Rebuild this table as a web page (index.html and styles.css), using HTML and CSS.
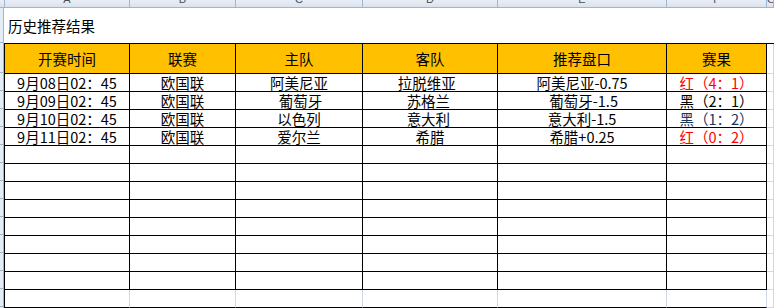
FILE: index.html
```html
<!DOCTYPE html>
<html lang="zh">
<head>
<meta charset="utf-8">
<title>历史推荐结果</title>
<link rel="stylesheet" href="styles.css">
</head>
<body>
<div class="sheet">
  <div class="colhdr">
    <div class="ch corner"></div>
    <div class="ch"><span>A</span></div>
    <div class="ch"><span>B</span></div>
    <div class="ch"><span>C</span></div>
    <div class="ch"><span>D</span></div>
    <div class="ch"><span>E</span></div>
    <div class="ch"><span>F</span></div>
    <div class="ch"><span>G</span></div>
  </div>
  <div class="body">
    <div class="rowhdr">
      <div class="rh rh-title"></div>
      <div class="rh rh-head"></div>
      <div class="rh"></div><div class="rh"></div><div class="rh"></div><div class="rh"></div>
      <div class="rh"></div><div class="rh"></div><div class="rh"></div><div class="rh"></div>
      <div class="rh"></div><div class="rh"></div><div class="rh"></div><div class="rh"></div>
      <div class="rh"></div>
    </div>
    <div class="content">
      <div class="title">历史推荐结果</div>
      <div class="grid">
        <div class="c h">开赛时间</div><div class="c h">联赛</div><div class="c h">主队</div><div class="c h">客队</div><div class="c h">推荐盘口</div><div class="c h">赛果</div><div class="g"></div>

        <div class="c">9月08日02：45</div><div class="c">欧国联</div><div class="c">阿美尼亚</div><div class="c">拉脱维亚  </div><div class="c">阿美尼亚-0.75</div><div class="c red">红（4：1）</div><div class="g"></div>
        <div class="c">9月09日02：45</div><div class="c">欧国联</div><div class="c"> 葡萄牙</div><div class="c">苏格兰 </div><div class="c"> 葡萄牙-1.5</div><div class="c">黑（2：1）</div><div class="g"></div>
        <div class="c">9月10日02：45</div><div class="c">欧国联</div><div class="c">以色列</div><div class="c">意大利 </div><div class="c">意大利-1.5</div><div class="c navy">黑（1：2）</div><div class="g"></div>
        <div class="c">9月11日02：45</div><div class="c">欧国联</div><div class="c">爱尔兰</div><div class="c">希腊</div><div class="c">希腊+0.25</div><div class="c red">红（0：2）</div><div class="g"></div>

        <div class="c"></div><div class="c"></div><div class="c"></div><div class="c"></div><div class="c"></div><div class="c"></div><div class="g"></div>
        <div class="c"></div><div class="c"></div><div class="c"></div><div class="c"></div><div class="c"></div><div class="c"></div><div class="g"></div>
        <div class="c"></div><div class="c"></div><div class="c"></div><div class="c"></div><div class="c"></div><div class="c"></div><div class="g"></div>
        <div class="c"></div><div class="c"></div><div class="c"></div><div class="c"></div><div class="c"></div><div class="c"></div><div class="g"></div>
        <div class="c"></div><div class="c"></div><div class="c"></div><div class="c"></div><div class="c"></div><div class="c"></div><div class="g"></div>
        <div class="c"></div><div class="c"></div><div class="c"></div><div class="c"></div><div class="c"></div><div class="c"></div><div class="g"></div>
        <div class="c"></div><div class="c"></div><div class="c"></div><div class="c"></div><div class="c"></div><div class="c"></div><div class="g"></div>
        <div class="c"></div><div class="c"></div><div class="c"></div><div class="c"></div><div class="c"></div><div class="c"></div><div class="g"></div>

        <div class="c last"></div><div class="c last"></div><div class="c last"></div><div class="c last"></div><div class="c last"></div><div class="c last"></div><div class="g lastg"></div>
      </div>
    </div>
  </div>
</div>
</body>
</html>
```

FILE: styles.css
```css
* { box-sizing: border-box; }
html, body {
  margin: 0;
  padding: 0;
  background: #fff;
}
body {
  width: 774px;
  height: 308px;
  overflow: hidden;
  font-family: "Noto Sans CJK SC", "Noto Sans", sans-serif;
  font-size: 14.5px;
  color: #000;
}
.sheet { width: 774px; }

.colhdr {
  display: grid;
  grid-template-columns: 5px 125px 106px 127px 135px 169px 100px 7px;
  height: 8px;
}
.ch {
  height: 8px;
  overflow: hidden;
  background: linear-gradient(#e9eef6, #dbe3ee);
  border-right: 1px solid #9eb6ce;
  border-bottom: 1px solid #9eb6ce;
  text-align: center;
  color: #4c4c4c;
  font-family: "Liberation Sans", sans-serif;
  font-size: 11px;
}
.ch span {
  display: block;
  line-height: 11px;
  margin-top: -6px;
}
.ch.corner { border-right: 1px solid #9eb6ce; }

.body {
  display: flex;
}
.rowhdr {
  width: 4px;
  flex: none;
  display: flex;
  flex-direction: column;
  background: #e4ecf7;
  border-right: 1px solid #9eb6ce;
}
.rh {
  height: 18px;
  border-bottom: 1px solid #9eb6ce;
}
.rh-title { height: 35px; }
.rh-head { height: 30px; }

.content {
  flex: 1;
}
.title {
  height: 35px;
  line-height: 35px;
  padding-left: 4px;
  white-space: nowrap;
}
.grid {
  display: grid;
  grid-template-columns: 125px 106px 127px 135px 169px 100px 7px;
  grid-auto-rows: 18px;
  border-top: 1px solid #000;
  border-left: 1px solid #000;
  width: 770px;
}
.grid > .h {
  height: 30px;
  background: #ffc000;
}
.c {
  border-right: 1px solid #000;
  border-bottom: 1px solid #000;
  text-align: center;
  white-space: pre;
  line-height: 17px;
  overflow: hidden;
}
.grid > div:nth-child(-n+7) {
  height: 30px;
  line-height: 29px;
}
.grid { grid-template-rows: 30px; }
.g {
  border-bottom: 1px solid #d0d7e5;
  border-right: 1px solid #d0d7e5;
}
.grid > .g:nth-child(7) { border-right-color: #d0d7e5; }
.c.last {
  border-right-color: #d0d7e5;
}
.red { color: #ff0000; }
.navy { color: #17375e; }
```
